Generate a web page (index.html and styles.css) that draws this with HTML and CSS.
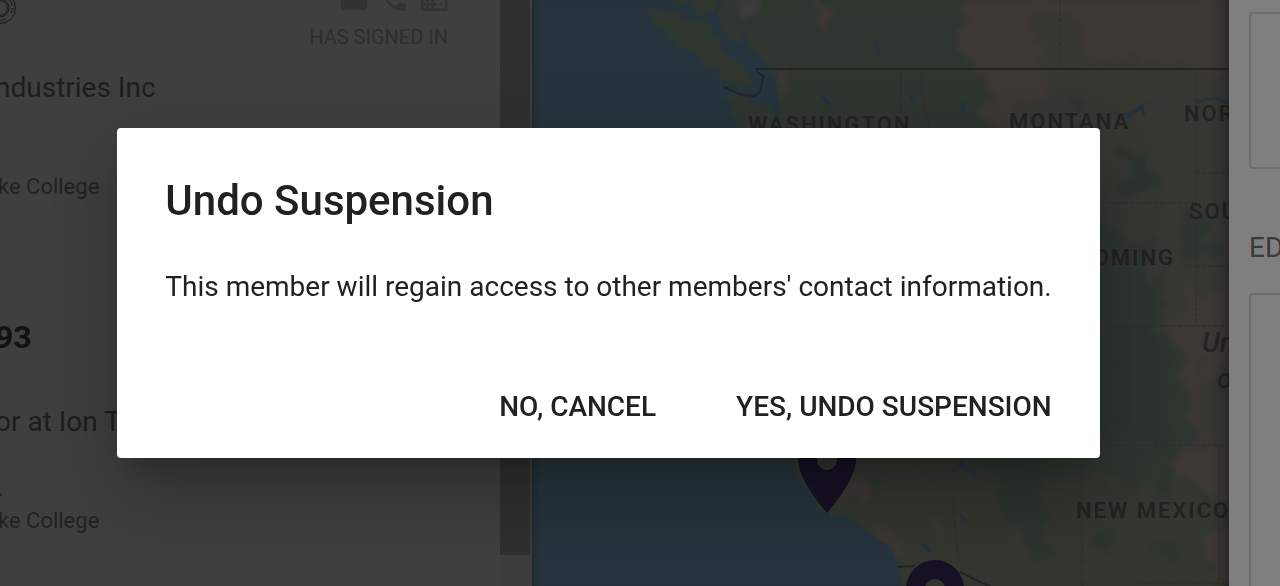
FILE: index.html
```html
<!DOCTYPE html>
<html lang="en">
<head>
    <meta charset="UTF-8">
    <meta name="viewport" content="width=device-width, initial-scale=1.0">
    <title>Undo Suspension</title>
    <link rel="stylesheet" href="styles.css">
</head>
<body>
    <div class="app">
        <div class="workspace">
            <section class="members">
                <article class="member">
                    <div class="member-top">
                        <svg class="seal" viewBox="0 0 40 40" aria-hidden="true">
                            <circle cx="20" cy="20" r="15.5"/>
                            <circle cx="20" cy="20" r="9"/>
                            <circle cx="20" cy="20" r="7.5"/>
                            <circle cx="20" cy="20" r="12.5" class="seal-text"/>
                        </svg>
                        <div class="icons">
                            <svg viewBox="0 0 24 24"><path d="M20 4H4a2 2 0 0 0-2 2v12c0 1.100.9 2 2 2h16a2 2 0 0 0 2-2V6a2 2 0 0 0-2-2zm0 4-8 5-8-5V6l8 5 8-5z"/></svg>
                            <svg viewBox="0 0 24 24"><path d="M6.620 10.790c1.440 2.830 3.760 5.140 6.590 6.590l2.200-2.200c.27-.27.67-.36 1.020-.24 1.120.37 2.330.57 3.570.57.55 0 1 .45 1 1V20c0 .55-.45 1-1 1C10.610 21 3 13.390 3 4c0-.55.45-1 1-1h3.500c.55 0 1 .45 1 1 0 1.250.2 2.450.57 3.570.11.35.03.74-.25 1.020z"/></svg>
                            <svg viewBox="0 0 24 24"><path d="M12 7V3H2v18h20V7H12zM6 19H4v-2h2v2zm0-4H4v-2h2v2zm0-4H4V9h2v2zm0-4H4V5h2v2zm4 12H8v-2h2v2zm0-4H8v-2h2v2zm0-4H8V9h2v2zm0-4H8V5h2v2zm10 12h-8v-2h2v-2h-2v-2h2v-2h-2V9h8v10zm-2-8h-2v2h2v-2zm0 4h-2v2h2v-2z"/></svg>
                        </div>
                    </div>
                    <p class="signed">HAS SIGNED IN</p>
                    <p class="job">ndustries Inc</p>
                    <p class="detail place">&nbsp;</p>
                    <p class="detail">ke College</p>
                </article>
                <article class="member">
                    <h2>93</h2>
                    <p class="job">or at Ion T</p>
                    <p class="detail place">.</p>
                    <p class="detail">ke College</p>
                </article>
            </section>
            <div class="scrollbar"><div class="thumb"></div></div>
            <div class="map">
                <svg viewBox="532 0 697 586" preserveAspectRatio="xMinYMin slice">
                    <defs>
                        <filter id="coast" x="-5%" y="-5%" width="110%" height="110%">
                            <feTurbulence type="fractalNoise" baseFrequency="0.09" numOctaves="3" seed="4"/>
                            <feDisplacementMap in="SourceGraphic" scale="9" xChannelSelector="R" yChannelSelector="G"/>
                        </filter>
                        <filter id="terrain" x="-10%" y="-10%" width="120%" height="120%">
                            <feTurbulence type="fractalNoise" baseFrequency="0.035" numOctaves="4" seed="9" result="n"/>
                            <feDisplacementMap in="SourceGraphic" in2="n" scale="44" xChannelSelector="R" yChannelSelector="G"/>
                            <feGaussianBlur stdDeviation="2"/>
                        </filter>
                        <clipPath id="land">
                            <path d="M722 0 718 20 730 38 743 43 745 28 748 47 757 53 763 62 775 78 778 97 782 113 775 115 770 107 750 100 727 95 737 127 730 300 788 458 820 513 845 518 867 530 890 547 897 563 907 590H1240V-5z"/>
                        </clipPath>
                    </defs>
                    <g filter="url(#coast)">
                        <path class="green" d="M722-10 718 20 730 38 743 43 745 28 748 47 757 53 763 62 775 78 778 97 782 113 775 115 770 107 750 100 727 95 737 127 730 300 788 458 820 513 845 518 867 530 890 547 897 563 907 600H1250V-10z"/>
                        <path class="island" d="M643 8 655 7 680 17 707 22 717 40 730 57 743 65 753 87 743 88 718 77 721 66 705 68 693 53 677 43 663 30 655 25 652 13z"/>
                        <path class="island" d="M668-5H718L716 10 700 15 690 4 672 2z"/>
                    </g>
                    <g clip-path="url(#land)">
                        <g filter="url(#terrain)">
                            <path class="tan" d="M962-20 965 60 985 95 1000 150 1100 190 1260 190V-20z"/>
                            <path class="olive" d="M1030 30 1065 10 1085 55 1120 60 1160 70 1250 70V200H1030L1010 110 1055 85z"/>
                            <path class="olive" d="M1085 120 1260 120V340H1170L1150 250 1085 210z"/>
                            <path class="tan" d="M1190 300 1260 270V500H1220L1205 470 1190 420 1172 340z"/>
                            <path class="olive" d="M1200 370 1260 350V480H1200z"/>
                            <path class="south" d="M790 440 900 440 1000 470 1260 500V600H900L870 530 830 515z"/>
                            <path class="tan" d="M1180 450 1240 440V480L1200 490 1175 485zM1205 540 1250 530V575L1205 575z"/>
                            <path class="tan" d="M845 480 862 470 866 505 842 507zM870 524 885 526 910 560 896 552zM932 520 945 517 945 535 937 535z"/>
                            <path class="tan" d="M770 60 795 65 785 72 783 95 777 75zM815 0 828 5 826 38 818 30zM1150 380 1162 375 1160 400 1150 405zM1010 535 1022 545 1012 548z"/>
                            <path class="forest" d="M1120 150 1150 160 1160 190 1130 190zM1180 220 1205 218 1215 250 1205 265 1190 245zM1115 320 1160 310 1175 440 1160 450 1110 430zM1000 440 1025 450 1055 530 1040 560 1000 510zM1155 460 1175 450 1170 490 1155 490z"/>
                            <path class="forest" d="M860 465 878 465 875 505 865 495zM1095 530 1115 530 1115 560 1097 560zM1063 88 1080 95 1090 112 1068 108zM1155 535 1168 535 1168 560 1155 560z"/>
                            <path class="snow" d="M730-10 752-5 765 22 755 25 745 10z"/>
                        </g>
                    </g>
                    <g class="water">
                        <path d="M874 40 879 43 880 57 875 52zM818 94 828 99 834 109 826 103zM909 94 918 97 913 105zM961 100 967 105 966 114 960 110zM921 541 932 548 930 553 922 547zM959 513 967 520 963 522zM1115 117 1133 110 1143 103 1146 118 1140 110 1128 119z"/>
                        <path class="river" d="M1196 102 1215 98 1229 103M950 471 960 468 962 461 966 470 972 471 977 477"/>
                        <path class="river stream" d="M1040 110 1054 105 1072 110 1110 118M1143 104 1165 100 1198 101"/>
                    </g>
                    <path class="border" d="M756 69H1229M724 87 742 95 755 96 761 90 762 80 764 76 759 74 756 69M897 567 915 566M960 572 982 583 1000 590"/>
                    <path class="state" d="M1060 0V69M1196 73V326M1100 203H1196M1196 173H1229M1196 266H1229M1100 326H1229M1100 445H1229M901 73V128M922 73V96L930 128M912 459 954 498V515L958 558M1082 459V586M1219 445V583H1136"/>
                    <g class="label">
                        <text x="748" y="132">WASHINGTON</text>
                        <text x="1009" y="129">MONTANA</text>
                        <text x="1184" y="121">NORTH</text>
                        <text x="1189" y="219">SOUTH</text>
                        <text x="1175" y="265" text-anchor="end">WYOMING</text>
                        <text x="1076" y="518">NEW MEXICO</text>
                    </g>
                    <g class="country">
                        <text x="1202" y="352">Un</text>
                        <text x="1217" y="388">o</text>
                    </g>
                    <path class="pin" fill-rule="evenodd" d="M827 430a29 29 0 0 0-29 29c0 22 29 54 29 54s29-32 29-54a29 29 0 0 0-29-29zm0 20a10 10 0 1 1 0 20 10 10 0 0 1 0-20z"/>
                    <path class="pin" fill-rule="evenodd" d="M935 560a29 29 0 0 0-29 29c0 22 29 54 29 54s29-32 29-54a29 29 0 0 0-29-29zm0 19a10 10 0 1 1 0 20 10 10 0 0 1 0-20z"/>
                </svg>
            </div>
        </div>
        <aside class="side">
            <div class="panel panel-small"></div>
            <h3>ED</h3>
            <div class="panel panel-large"></div>
        </aside>
    </div>
    <div class="backdrop">
        <div class="dialog" role="dialog" aria-modal="true" aria-labelledby="dialog-title">
            <h1 id="dialog-title">Undo Suspension</h1>
            <p>This member will regain access to other members' contact information.</p>
            <div class="actions">
                <button type="button">NO, CANCEL</button>
                <button type="button">YES, UNDO SUSPENSION</button>
            </div>
        </div>
    </div>
</body>
</html>
```
FILE: styles.css
```css
* {
    box-sizing: border-box;
}
body {
    margin: 0;
    font-family: Roboto, "Liberation Sans", sans-serif;
    background-color: #fff;
    overflow: hidden;
}
h1, h2, h3, p {
    margin: 0;
}
.app {
    display: flex;
    height: 100vh;
    overflow: hidden;
}

/* members list and map sit behind their own half-black layer */
.workspace {
    position: relative;
    display: flex;
    flex: 1;
    min-width: 0;
    overflow: hidden;
}
.workspace::after {
    content: '';
    position: absolute;
    inset: 0;
    background-color: rgba(0, 0, 0, 0.5);
}
.members {
    flex: 0 0 500px;
    margin-top: -17px;
    color: #888;
    overflow: hidden;
}
.member {
    margin-left: -5px;
    margin-bottom: 110px;
}
.member-top {
    display: flex;
    justify-content: space-between;
    align-items: flex-start;
    padding-right: 50px;
}
.seal {
    width: 40px;
    height: 40px;
    margin-left: -15px;
    margin-top: 5px;
    fill: none;
    stroke: #606060;
    stroke-width: 1;
}
.seal .seal-text {
    stroke-width: 2;
    stroke-dasharray: 1 1 1 1 1 9;
}
.icons {
    display: flex;
    gap: 8px;
}
.icons svg {
    width: 32px;
    height: 32px;
    fill: #c8c8c8;
}
.signed {
    padding-right: 52px;
    margin-top: -5px;
    text-align: right;
    font-size: 20px;
    line-height: 28px;
    color: #b4b4b4;
}
.job {
    margin-top: 17px;
    font-size: 28px;
    line-height: 40px;
    color: #787878;
}
.detail {
    padding-left: 3px;
    font-size: 22px;
    line-height: 32px;
    color: #888;
}
.place {
    margin-top: 31px;
}
.member h2 {
    margin-bottom: 41px;
    font-size: 32px;
    line-height: 48px;
    color: #484848;
}
.scrollbar {
    flex: 0 0 32px;
    padding: 0 2px 31px 0;
    background-color: #f4f4f4;
}
.thumb {
    height: 100%;
    background-color: #c0c0c0;
}

/* map */
.map {
    position: relative;
    flex: 1;
    min-width: 0;
    background-color: #9cd2f6;
}
.map::after {
    content: '';
    position: absolute;
    inset: 0;
    box-shadow: inset 8px 0 8px -8px rgba(0, 0, 0, 0.4), inset -16px 0 16px -12px rgba(0, 0, 0, 0.4);
}
.map svg {
    display: block;
    width: 100%;
    height: 100%;
}
.green { fill: #bcdabc; }
.island { fill: #bedab8; }
.forest { fill: #b4d6b8; }
.olive { fill: #dcdec8; }
.south { fill: #ccdcbc; }
.tan { fill: #f0e0d0; }
.snow { fill: #f0ecf0; }
.water { fill: #94ccf4; }
.river {
    fill: none;
    stroke: #94ccf4;
    stroke-width: 3;
}
.stream {
    stroke: #bcd8e4;
    stroke-width: 2;
}
.border {
    fill: none;
    stroke: #909090;
    stroke-width: 2;
}
.state {
    fill: none;
    stroke: #b0b4b0;
    stroke-width: 1;
    stroke-dasharray: 4 2;
}
.label {
    font-size: 22px;
    font-weight: 600;
    letter-spacing: 2px;
    fill: #8c8888;
}
.country {
    font-size: 28px;
    font-style: italic;
    font-weight: 500;
    fill: #909090;
}
.pin {
    fill: #5c4498;
}

/* right column */
.side {
    flex: 0 0 51px;
    padding: 12px 0 0 20px;
    overflow: hidden;
}
.panel {
    width: 400px;
    border: 2px solid #dcdcdc;
    border-radius: 4px;
}
.panel-small {
    height: 157px;
}
.panel-large {
    height: 400px;
}
.side h3 {
    margin: 59px 0 25px;
    font-size: 28px;
    font-weight: 400;
    line-height: 40px;
    color: #757575;
}

/* dialog */
.backdrop {
    position: fixed;
    inset: 0;
    display: flex;
    align-items: center;
    justify-content: center;
    padding-right: 63px;
    background-color: rgba(0, 0, 0, 0.5);
}
.dialog {
    padding: 49px 48px 31px;
    border-radius: 4px;
    background-color: #fff;
    color: #212121;
    box-shadow: 0 22px 30px -14px rgba(0, 0, 0, 0.2),
        0 48px 76px 6px rgba(0, 0, 0, 0.14),
        0 18px 92px 16px rgba(0, 0, 0, 0.12);
}
.dialog h1 {
    font-size: 42px;
    font-weight: 500;
    line-height: 48px;
}
.dialog p {
    margin-top: 40px;
    font-size: 28px;
    line-height: 44px;
}
.actions {
    display: flex;
    justify-content: flex-end;
    gap: 80px;
    margin-top: 78px;
}
.actions button {
    padding: 0;
    border: 0;
    background: none;
    font-family: inherit;
    font-size: 28px;
    font-weight: 500;
    line-height: 40px;
    color: inherit;
    cursor: pointer;
}
```
